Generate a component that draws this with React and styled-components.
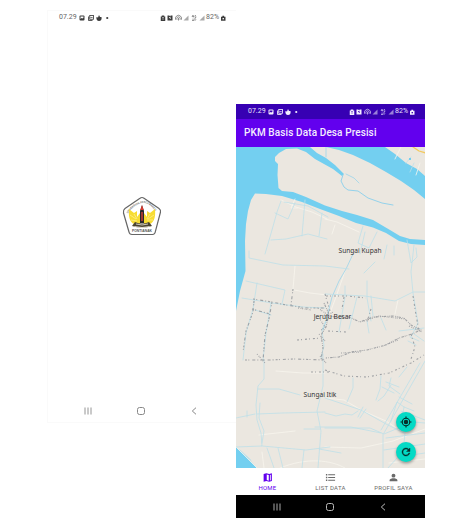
import React from "react";
import styled, { createGlobalStyle } from "styled-components";

const Global = createGlobalStyle`
  * { box-sizing: border-box; }
  body { margin: 0; background: #fff; font-family: Roboto, "Liberation Sans", sans-serif; }
`;

const Stage = styled.main`
  display: flex;
  align-items: flex-start;
  width: 472px;
  height: 529px;
  padding: 10px 0 0 47px;
  overflow: hidden;
`;
const Phone = styled.section`
  display: flex;
  flex-direction: column;
  flex: none;
  width: 189px;
  height: ${(p) => p.$height}px;
  margin-top: ${(p) => p.$top || 0}px;
  background: #fff;
  ${(p) => p.$outlined && "box-shadow: inset 1px 0 #fafafa, inset 0 1px #fafafa, inset 0 -1px #fafafa;"}
`;
const StatusRow = styled.header`
  display: flex;
  align-items: center;
  justify-content: space-between;
  height: 15px;
  flex: none;
  padding: 0 10.5px 0 12px;
  font-size: 7px;
  line-height: 15px;
  color: ${(p) => (p.$dark ? "#e9e2fb" : "#666")};
  background: ${(p) => (p.$dark ? "#3700b3" : "transparent")};
`;
const Cluster = styled.div`
  display: flex;
  align-items: center;
  gap: ${(p) => p.$gap}px;
`;
const Time = styled.span`
  width: 18px;
`;
const Percent = styled.span`
  width: 13.3px;
`;
const Glyph = styled.svg`
  display: block;
  flex: none;
  width: ${(p) => p.$w || 6}px;
  height: ${(p) => p.$h || p.$w || 6}px;
  overflow: visible;
`;
const AppBar = styled.h1`
  display: flex;
  align-items: center;
  flex: none;
  height: 27.5px;
  margin: 0;
  padding: 0 8px;
  color: #f4eeff;
  background: #6200ee;
  font-size: 10px;
  font-weight: 500;
  letter-spacing: 0.11px;
  white-space: nowrap;
`;
const MapArea = styled.div`
  position: relative;
  flex: 1;
  min-height: 0;
  overflow: hidden;
  background: #ebe7e0;
`;
const MapSvg = styled.svg`
  display: block;
  width: 189px;
  height: 321px;
`;
const Place = styled.span`
  position: absolute;
  left: ${(p) => p.$x}px;
  top: ${(p) => p.$y}px;
  transform: translate(-50%, -50%);
  font: 6.6px/8px "Noto Sans", sans-serif;
  color: #333;
  white-space: nowrap;
  opacity: 0.99;
`;
const Fab = styled.button`
  position: absolute;
  right: 9.5px;
  bottom: ${(p) => p.$bottom}px;
  display: grid;
  place-items: center;
  width: 20px;
  height: 20px;
  padding: 0;
  border: 0;
  border-radius: 50%;
  background: #03dac5;
  color: #062e2b;
  box-shadow: 0 1.5px 3px rgba(0, 0, 0, 0.35);
`;
const Tabs = styled.nav`
  display: grid;
  grid-template-columns: repeat(3, 1fr);
  flex: none;
  height: 27px;
  background: #fff;
`;
const Tab = styled.div`
  display: flex;
  flex-direction: column;
  align-items: center;
  padding-top: 4px;
  gap: 1px;
  color: ${(p) => (p.$active ? "#6200ee" : "#6a6a6a")};
  font-size: 6px;
  line-height: 7px;
  letter-spacing: 0.26px;
  white-space: nowrap;
`;
const SystemNav = styled.footer`
  display: grid;
  grid-template-columns: 53px 53px 53px;
  place-items: center;
  flex: none;
  height: ${(p) => (p.$dark ? 23 : 24)}px;
  padding-left: 14.5px;
  color: ${(p) => (p.$dark ? "#bbb" : "#888")};
  background: ${(p) => (p.$dark ? "#000" : "transparent")};
`;
const Splash = styled.div`
  display: grid;
  place-items: center;
  flex: 1;
  padding-top: 7px;
`;

function StatusBar({ dark }) {
  const hole = dark ? "#3700b3" : "#fff";
  const ink = dark ? "#f4efff" : "#3c3c3c";
  const faint = dark ? "#9b80d9" : "#aaa";
  return (
    <StatusRow $dark={dark}>
      <Cluster $gap={2.3}>
        <Time>07.29</Time>
        <Glyph viewBox="0 0 12 12">
          <rect x="1" y="1" width="10" height="10" rx="2" fill={ink} />
          <path d="M3 3h6v2l-2 2-2-1-2 2z" fill={hole} />
        </Glyph>
        <Glyph viewBox="0 0 12 12" fill="none" stroke={ink} strokeWidth="1.7">
          <rect x="3.5" y="1" width="7.5" height="7.5" />
          <path d="M1 3v8h8M5 6l2-2 2 2" />
        </Glyph>
        <Glyph viewBox="0 0 12 12">
          <path d="M1 4l3 1 2-5 2 4 3 0c1 5-1 8-5 8S0 8 1 4z" fill={ink} />
        </Glyph>
        <Glyph viewBox="0 0 12 12"><circle cx="6.5" cy="6" r="2.2" fill={ink} /></Glyph>
      </Cluster>
      <Cluster $gap={1.6}>
        <Glyph viewBox="0 0 12 12">
          <path d="M1.500 3h2V1h5v2h2v9h-9z" fill={ink} />
          <path d="M4 5h4M4 8h4" stroke={hole} />
        </Glyph>
        <Glyph viewBox="0 0 12 12">
          <path d="M1 1h3l2 1 2-1h3v10H1z" fill={ink} />
          <path d="M4 4l4 4M4 6l4-2" stroke={hole} strokeWidth="1.2" />
        </Glyph>
        <Glyph $w={7} $h={6} viewBox="0 0 14 12" fill="none" stroke={dark ? "#cbbcf0" : "#777"} strokeWidth="1.7">
          <path d="M2 10a6 6 0 1 1 10 0M4.500 9a3.200 3.200 0 1 1 5 0M7 6v5" />
        </Glyph>
        <Glyph viewBox="0 0 12 12"><path d="M1 11L11 1v10z" fill={faint} /></Glyph>
        <Glyph viewBox="0 0 12 12" fill="none" stroke={dark ? "#cbbcf0" : "#777"} strokeWidth="1.3">
          <path d="M4 0L2 3h4M4.500 0v5M10 1H8v4h2V3M4 7v5M2 10l2 2 2-2M8 12V7M6 9l2-2 2 2" />
        </Glyph>
        <Glyph viewBox="0 0 12 12"><path d="M1 11L11 1v10z" fill={faint} /></Glyph>
        <Percent>82%</Percent>
        <Glyph $w={4.5} $h={6} viewBox="-1 0 10 12">
          <path d="M-1 3h3V1h4v2h3v9h-10z" fill={ink} />
          <rect x="2.500" y="6" width="3" height="3" fill={hole} />
        </Glyph>
      </Cluster>
    </StatusRow>
  );
}

function NavKeys({ dark }) {
  return (
    <SystemNav $dark={dark}>
      <Glyph $w={8} viewBox="0 0 8 8" stroke="currentColor" strokeWidth="0.9"><path d="M1 .5v7M4 .5v7M7 .5v7" /></Glyph>
      <Glyph $w={8} viewBox="0 0 8 8" stroke="currentColor" fill="none"><rect x=".5" y=".5" width="7" height="7" rx="2" /></Glyph>
      <Glyph $w={8} viewBox="0 0 8 8" stroke="currentColor" fill="none"><path d="M6 .7L2.300 4 6 7.300" /></Glyph>
    </SystemNav>
  );
}

function Crest() {
  return (
    <Glyph $w={40} viewBox="0 0 40 40">
      <defs>
        <path id="crest-top" d="M6 17.500C8 13 14 8.500 20 7S32 13 34.500 17.500" />
        <path id="crest-base" d="M10 35.500H31" />
      </defs>
      <path d="M20 1.500Q21 1.500 22 2.200L37 12.500Q39 14 38.500 16L33.500 35Q33 38.500 30.500 38.500H10Q7.500 38.500 7 36L1.500 17Q1 14 3 12.500L18 2.300Q19 1.500 20 1.500Z" fill="#fff" stroke="#666" strokeWidth="1.2" />
      <text fontFamily="Liberation Sans" fontSize="2.7" fontWeight="700" fill="#666"><textPath href="#crest-top" textLength="34" lengthAdjust="spacingAndGlyphs">UNIVERSITAS PANCA BHAKTI</textPath></text>
      <path d="M17 28C9 30 6 23 7 13l5 4 3-2 0 6 3-4v11zM23 28c8 2 11-5 10-15l-5 4-3-2 0 6-3-4v11z" fill="#f7dc32" />
      <path d="M8 19l6 4M9 24l6 1M32 19l-6 4M31 24h-6M12 18l3 5M28 18l-3 5" stroke="#fff197" strokeWidth=".7" />
      <path d="M18 15l2-6 2 6v12h-4z" fill="#292829" />
      <path d="M18.300 14L20 9l1.700 5z" fill="#d9372c" />
      <path d="M20 16v9" stroke="#ef4136" strokeWidth="1.2" />
      <path d="M13 26q7 3 14 0l3 4q-10 3-20 0z" fill="#4b4430" />
      <path d="M14 28q6 2 12 0M12.500 30.500q7.500 2 15 0" fill="none" stroke="#f3ece2" strokeWidth=".8" />
      <text fontFamily="Liberation Sans" fontSize="3" fontWeight="700" fill="#555"><textPath href="#crest-base" textLength="20" lengthAdjust="spacingAndGlyphs">PONTIANAK</textPath></text>
    </Glyph>
  );
}

function VillageMap() {
  return (
    <MapSvg viewBox="236 147 189 321" fill="none" strokeLinecap="round" strokeLinejoin="round">
      <path fill="#73cff0" d="M236 147H310L317 153 326 158 335 165 344 174 342 176 333 169 324 164 315 159 306 152 297 148.500 286 149 279 153 275 157 275 161 278 164 277.500 175 278.500 188 282 191 293 192 306 197 325 205.500 342 211 357 215 373 220 390 230 400 236 410 239 425 240V245L411 244 399 241 386 233 373 227.500 356 223 339 216 320 209 302 202 282 196 266 194 255 193.500 251 200 248 211 246 224 245 241 245.500 271 240 291 236 311Z" />
      <path fill="#73cff0" d="M326 147H385L395 154 406 163 417 169 425 176V199L414 190 401 181 386 172 370 163 353 155 339 150Z" />
      <path fill="#73cff0" d="M236 447L247 457 257 468H236Z" />
      <path stroke="#f3c95e" strokeWidth="1.3" d="M413 147L419 151 426 153" />
      <g stroke="#f8f5ed" strokeWidth=".8">
        <path d="M295 199L291 208 298 208M281 200L296 207 312 212 327 219M295 266L293 289M294 290L310 293 327 295M276 371L303 373 325 373M345 271L336 297 327 321M401 147L395 159M420 163L416 175M398 300L395 314M236 447L257 468M262 452L264 468M389 463L425 459M259 435L295 431M325 447L361 448 393 441 425 429M280 468C307 457 331 460 345 468" />
        <path d="M325 219L337 222 359 232M335 225L332 234M326 398L344 400 363 411 386 421 404 433" />
      </g>
      <g stroke="#acd9e9" strokeWidth="1"><path d="M346 174L354 178 359 183M353 254L346 269 339 281 332 297 326 321 323 330M326 147V157" /></g>
      <path stroke="#94d2eb" strokeWidth="1" d="M343 175L341 181 344 187 348 190 358 191 368 198 382 203 393 205" />
      <g stroke="#bedfe9" strokeWidth=".8">
        <path d="M281 201L277 212 272 230 265 254M271 240L286 239 308 234 327 239M305 200L302 236M322 213L319 236M275 213L288 219 295 203M284 202L308 206 328 217M249 251V258L283 265 325 266 349 269" />
        <path d="M246 281L285 290 282 304M257 283L253 309 246 333 243 360M242 298L272 303 303 307 325 308M255 310L271 315M271 303L266 333 263 360M363 226L358 243 369 248 377 232M365 232L360 254M394 246V255M407 240L411 263 417 257 416 248M414 245L411 272 413 293 418 323 411 337M425 292H413L395 301 365 296 325 294" />
        <path d="M345 286V297L339 332M367 281V298L371 321M371 296L373 316M357 297L349 329M367 321L369 333M381 318L386 330M387 245L384 259M375 262L364 273" />
        <path d="M264 360V379L258 386 256 405 257 420 261 433 262 446 236 447M258 389L279 389 300 395M257 414L282 413 325 412M236 418L255 414M323 354V386L317 411 321 431 318 468M304 429H320M315 427H351L381 433M240 450L251 460M267 448L274 468M278 448L283 468M304 450L302 468M319 449L341 453M353 378V388L347 402M325 398L346 405 361 410 386 424 404 433M325 413L336 416 345 414 352 415 358 411M325 428H370L384 434 413 422 425 423M383 434V468M384 450L425 444M384 433L425 361" />
        <path d="M381 430L420 363M381 376L380 389 376 400M391 378L389 386 400 394M391 385L384 396 378 401M399 387L386 382M394 393L382 387M407 367L399 377M414 411L404 407 397 402 391 421M404 407L402 419M412 404L399 397M425 420L401 411M405 433L404 443M387 469L398 457 425 453M386 438L425 433M262 446L306 450 330 447" />
        <path d="M260 403L259 418 264 431 262 443M363 407L358 417M366 409L360 418M410 337L419 341M414 334L424 341M408 341L416 345M399 331L424 328M247 411V417M411 157L406 163M414 163L410 172M326 320L322 330 324 346 321 358" />
      </g>
      <path fill="#73cff0" d="M409 158h2v2h-2z" />
      <g stroke="#858990" strokeWidth="1.1" strokeLinecap="butt" opacity=".72">
        <path strokeDasharray="2 1.3 1 3 3 2 1 2" d="M253 299L272 302 286 305 307 308 325 308M254 301L253 312 246 331 243 352M272 302L269 319 265 335 263 361M245 360L270 360 293 359 325 360M293 289L291 305M252 309L270 314" />
        <path strokeDasharray="1 .8 2.5 1.5 .7 1" d="M324 303L329 314 326 327 321 335 323 348 321 360M324 315L335 317 349 317 360 322 373 317 393 316 404 318 411 325 421 330 412 334 399 338 386 345 367 350 351 352 339 357 325 358" />
        <path strokeDasharray="2 2 1 3" d="M326 296L347 296 366 298M344 297L342 309M371 309L367 322M413 296L416 315 419 331M411 334L415 347 411 359M297 340L321 338M328 331L346 332M325 294L330 311M325 370L344 376 367 377 389 373 411 363 424 355M311 372L329 372" />
        <path strokeDasharray="1 1.6 .8 .8" d="M318 308L328 315 333 312M318 316L325 327 320 331M319 334L325 341M298 308L311 310M364 321L379 316 405 319M257 354L265 363M409 326L422 332M385 345L398 340M341 353L361 352M320 356L326 363" />
      </g>
    </MapSvg>
  );
}

export default function App() {
  return (
    <>
      <Global />
      <Stage>
        <Phone $height={413} $outlined>
          <StatusBar />
          <Splash><Crest /></Splash>
          <NavKeys />
        </Phone>
        <Phone $height={414} $top={94}>
          <StatusBar dark />
          <AppBar>PKM Basis Data Desa Presisi</AppBar>
          <MapArea>
            <VillageMap />
            <Place $x={124} $y={104}>Sungai Kupah</Place>
            <Place $x={96.5} $y={170}>Jeruju Besar</Place>
            <Place $x={84} $y={248.5}>Sungai Itik</Place>
            <Fab $bottom={36.5} aria-label="Lokasi">
              <Glyph $w={12} viewBox="0 0 24 24" fill="none" stroke="currentColor" strokeWidth="2.3">
                <circle cx="12" cy="12" r="7.500" /><circle cx="12" cy="12" r="3.300" fill="currentColor" /><path d="M12 1v4M12 19v4M1 12h4M19 12h4" />
              </Glyph>
            </Fab>
            <Fab $bottom={6} aria-label="Muat ulang">
              <Glyph $w={12} viewBox="0 0 24 24" fill="currentColor"><path d="M17.650 6.350A8 8 0 1 0 19.730 14h-2.080A6 6 0 1 1 12 6c1.660 0 3.140.69 4.220 1.780L13 11h7V4z" stroke="currentColor" strokeWidth=".8" /></Glyph>
            </Fab>
          </MapArea>
          <Tabs>
            <Tab $active>
              <Glyph $w={11.5} $h={11} viewBox="0 0 24 24" fill="currentColor"><path fillRule="evenodd" d="M3 4.500L9 2.500 15 4.500 21 2.500V19.500L15 21.500 9 19.500 3 21.500ZM9.800 5.200V17.600L14.200 19V6.600ZM16.800 6.600V18.800L18.500 18.200V6Z" /></Glyph>
              HOME
            </Tab>
            <Tab>
              <Glyph $w={11} viewBox="0 0 24 24" fill="currentColor"><path d="M2 4.500h3v3H2zm5 .5h15v2H7zM2 10.500h3v3H2zm5 .5h15v2H7zM2 16.500h3v3H2zm5 .5h15v2H7z" /></Glyph>
              LIST DATA
            </Tab>
            <Tab>
              <Glyph $w={11} viewBox="0 0 24 24" fill="currentColor"><circle cx="12" cy="8" r="4.200" /><path d="M3.500 20v-2.500c0-3 5.700-4 8.500-4s8.500 1 8.500 4V20z" /></Glyph>
              PROFIL SAYA
            </Tab>
          </Tabs>
          <NavKeys dark />
        </Phone>
      </Stage>
    </>
  );
}
